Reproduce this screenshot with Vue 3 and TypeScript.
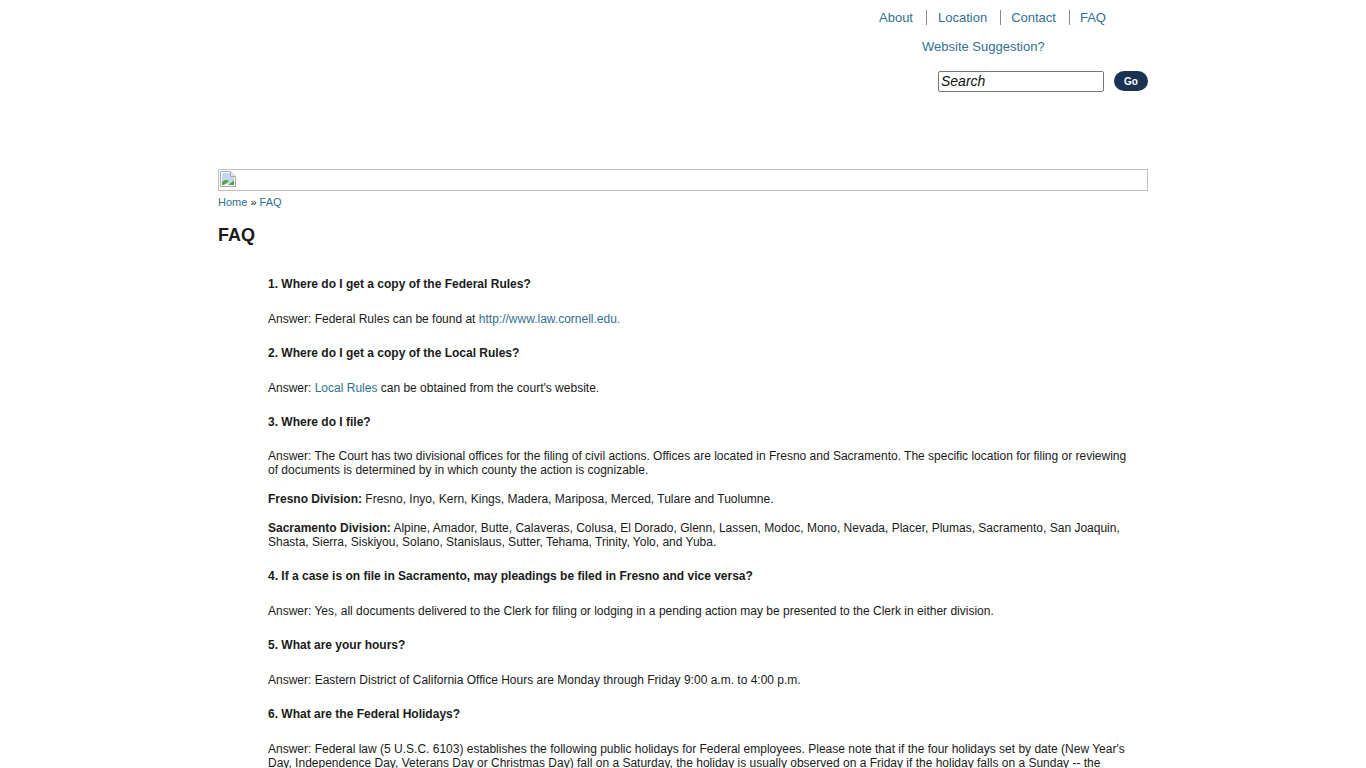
<template>
  <div class="page">
    <header class="top">
      <nav class="top-nav">
        <a v-for="item in navItems" :key="item" href="#" class="top-link">{{ item }}</a>
      </nav>
      <a href="#" class="suggest">Website Suggestion?</a>
      <form class="search" @submit.prevent>
        <input class="search-input" type="text" value="Search" aria-label="Search" />
        <button class="search-go" type="submit">Go</button>
      </form>
    </header>

    <div class="banner">
      <svg class="broken" width="16" height="16" viewBox="0 0 16 16" aria-hidden="true">
        <path d="M0.5 0.5H10.5L15.5 5.5V15.5H0.5Z" fill="#fff" stroke="#a8a8a8" />
        <path d="M10.5 0.5V5.5H15.5" fill="#e8e8e8" stroke="#a8a8a8" />
        <path d="M2 2H10V6H14V9L9 13H2Z" fill="#c4d6f2" />
        <path d="M2 14V11C5 8 8 9 9 10L4 14Z" fill="#5aa246" />
        <path d="M8 14L14 9V14Z" fill="#5aa246" />
      </svg>
    </div>

    <div class="crumbs">
      <a href="#">Home</a> » <a href="#">FAQ</a>
    </div>

    <h1 class="title">FAQ</h1>

    <main class="faq">
      <p class="q">1. Where do I get a copy of the Federal Rules?</p>
      <p>Answer: Federal Rules can be found at <a href="#">http://www.law.cornell.edu.</a></p>

      <p class="q">2. Where do I get a copy of the Local Rules?</p>
      <p>Answer: <a href="#">Local Rules</a> can be obtained from the court's website.</p>

      <p class="q">3. Where do I file?</p>
      <p class="tight">
        Answer: The Court has two divisional offices for the filing of civil actions. Offices are located in Fresno and
        Sacramento. The specific location for filing or reviewing of documents is determined by in which county the
        action is cognizable.
      </p>
      <p class="tight"><strong>Fresno Division:</strong> Fresno, Inyo, Kern, Kings, Madera, Mariposa, Merced, Tulare and Tuolumne.</p>
      <p>
        <strong>Sacramento Division:</strong> Alpine, Amador, Butte, Calaveras, Colusa, El Dorado, Glenn, Lassen, Modoc,
        Mono, Nevada, Placer, Plumas, Sacramento, San Joaquin, Shasta, Sierra, Siskiyou, Solano, Stanislaus, Sutter,
        Tehama, Trinity, Yolo, and Yuba.
      </p>

      <p class="q">4. If a case is on file in Sacramento, may pleadings be filed in Fresno and vice versa?</p>
      <p>Answer: Yes, all documents delivered to the Clerk for filing or lodging in a pending action may be presented to the Clerk in either division.</p>

      <p class="q">5. What are your hours?</p>
      <p>Answer: Eastern District of California Office Hours are Monday through Friday 9:00 a.m. to 4:00 p.m.</p>

      <p class="q">6. What are the Federal Holidays?</p>
      <p>
        Answer: Federal law (5 U.S.C. 6103) establishes the following public holidays for Federal employees. Please note
        that if the four holidays set by date (New Year's Day, Independence Day, Veterans Day or Christmas Day) fall on a
        Saturday, the holiday is usually observed on a Friday if the holiday falls on a Sunday -- the holiday is usually
        observed on the following Monday.
      </p>
    </main>
  </div>
</template>

<script setup lang="ts">
const navItems: string[] = ['About', 'Location', 'Contact', 'FAQ'];
</script>

<style>
html,
body {
  margin: 0;
  background: #fff;
  overflow: hidden;
}
</style>

<style scoped>
.page {
  width: 930px;
  margin: 0 auto;
  font-family: 'Liberation Sans', Arial, sans-serif;
  font-size: 12px;
  line-height: 14px;
  color: #1a1a1a;
}

a {
  color: #31708f;
  text-decoration: none;
}

.top {
  height: 169px;
  padding-top: 10px;
  box-sizing: border-box;
}

.top-nav {
  display: flex;
  padding-left: 649px;
}

.top-link {
  font-size: 13px;
  padding: 0 13px 0 10px;
  border-left: 1px solid #8a8a8a;
  height: 15px;
  line-height: 15px;
}

.top-link:first-child {
  border-left: 0;
  padding-left: 12px;
}

.top-link:nth-child(2) {
  padding-left: 11px;
}

.suggest {
  display: block;
  font-size: 13px;
  line-height: 16px;
  margin: 14px 0 0 704px;
}

.search {
  display: flex;
  align-items: flex-start;
  gap: 10px;
  margin: 16px 0 0 720px;
}

.search-input {
  width: 166px;
  height: 21px;
  box-sizing: border-box;
  padding: 0 2px 2px;
  border: 1px solid #767676;
  border-radius: 2px;
  font-family: inherit;
  font-size: 14px;
  font-style: italic;
  color: #111;
  outline: none;
}

.search-go {
  width: 34px;
  height: 20px;
  padding: 0;
  border: 0;
  border-radius: 10px;
  background: #1a3353;
  color: #fff;
  font-family: inherit;
  font-size: 10px;
  font-weight: bold;
}

.banner {
  height: 22px;
  box-sizing: border-box;
  border: 1px solid #c0c0c0;
  padding: 1px;
}

.broken {
  display: block;
}

.crumbs {
  font-size: 11px;
  line-height: 13px;
  margin-top: 5px;
}

.title {
  font-size: 18px;
  line-height: 21px;
  font-weight: bold;
  margin: 16px 0 0;
}

.faq {
  padding: 31px 18px 0 50px;
}

.faq p {
  margin: 0 0 20px;
}

.faq .q {
  font-weight: bold;
  margin-bottom: 20.75px;
}

.faq .tight {
  margin-bottom: 15px;
}
</style>
